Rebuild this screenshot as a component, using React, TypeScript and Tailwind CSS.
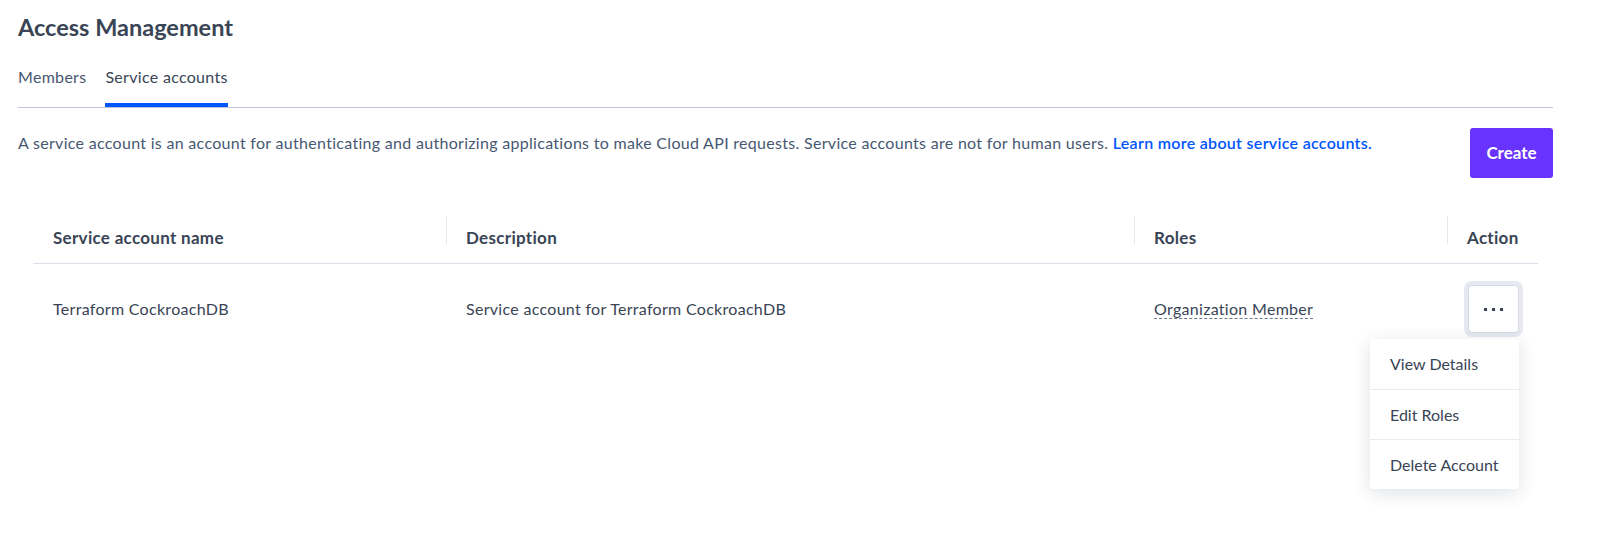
import React from 'react';

const columns = [
  { label: 'Service account name', width: 'w-[413px]', divider: false },
  { label: 'Description', width: 'w-[688px]', divider: true },
  { label: 'Roles', width: 'w-[313px]', divider: true },
  { label: 'Action', width: 'w-[91px]', divider: true },
];

const menuItems = ['View Details', 'Edit Roles', 'Delete Account'];

const App: React.FC = () => {
  return (
    <div className="min-h-screen bg-white pl-[18px] pr-[66px] font-['Lato',sans-serif] text-[#394455]">
      {/* encabezado */}
      <h1 className="pt-[12px] text-[23.5px] leading-[30px] font-bold text-[#394455]">Access Management</h1>

      <div className="mt-[23px] flex gap-[19px] border-b border-[#c0c6d9] tracking-[0.3px]">
        <button className="border-b-4 border-transparent pb-[14px] text-[16px] leading-[24px] text-[#475872]">Members</button>
        <button className="border-b-4 border-[#0055ff] pb-[14px] text-[16px] leading-[24px] text-[#394455]">Service accounts</button>
      </div>

      <div className="mt-[20px] flex items-start justify-between">
        <p className="mt-[3px] text-[16px] leading-[24px] tracking-[0.3px] text-[#475872]">
          A service account is an account for authenticating and authorizing applications to make Cloud API requests. Service accounts are not for human users.{' '}
          <a href="#" className="font-semibold text-[#0055ff]">Learn more about service accounts.</a>
        </p>
        <button className="h-[50px] w-[83px] rounded-[3px] bg-[#6933ff] text-[17px] font-bold text-white">Create</button>
      </div>

      {/* tabla */}
      <div className="mx-[15px] mt-[27px]">
        <div className="flex h-[59px] border-b border-[#dcdfea]">
          {columns.map((c) => (
            <div key={c.label} className={`relative ${c.width} pl-[20px] pt-[21px]`}>
              {c.divider && <span className="absolute left-0 top-[11px] h-[28px] w-px bg-[#e4e7ee]" />}
              <span className="text-[17px] leading-[24px] font-bold tracking-[0.3px] text-[#394455]">{c.label}</span>
            </div>
          ))}
        </div>

        <div className="flex h-[90px] items-center text-[16px] leading-[24px] text-[#394455]">
          <div className="w-[413px] pl-[20px] tracking-[0.3px]">Terraform CockroachDB</div>
          <div className="w-[688px] pl-[20px] tracking-[0.3px]">Service account for Terraform CockroachDB</div>
          <div className="w-[313px] pl-[20px] tracking-[0.3px]">
            <span className="border-b border-dashed border-[#6b7894]">Organization Member</span>
          </div>
          <div className="w-[91px] pl-[21px]">
            <div className="relative w-[51px]">
              <button className="flex h-[48px] w-[51px] items-center justify-center gap-[5px] rounded-[4px] border border-[#d4d9e3] bg-white ring-4 ring-[#e6e9f0]">
                <span className="h-[3px] w-[3px] bg-[#394455]" />
                <span className="h-[3px] w-[3px] bg-[#394455]" />
                <span className="h-[3px] w-[3px] bg-[#394455]" />
              </button>
              <div className="absolute right-0 top-[54px] w-[149px] rounded-[4px] bg-white shadow-[0_4px_18px_rgba(30,40,70,0.14)]">
                {menuItems.map((item, i) => (
                  <div
                    key={item}
                    className={`flex h-[50px] items-center whitespace-nowrap px-[20px] text-[16px] text-[#394455] ${i > 0 ? 'border-t border-[#e7ebf2]' : ''}`}
                  >
                    {item}
                  </div>
                ))}
              </div>
            </div>
          </div>
        </div>
      </div>
    </div>
  );
};

export default App;
